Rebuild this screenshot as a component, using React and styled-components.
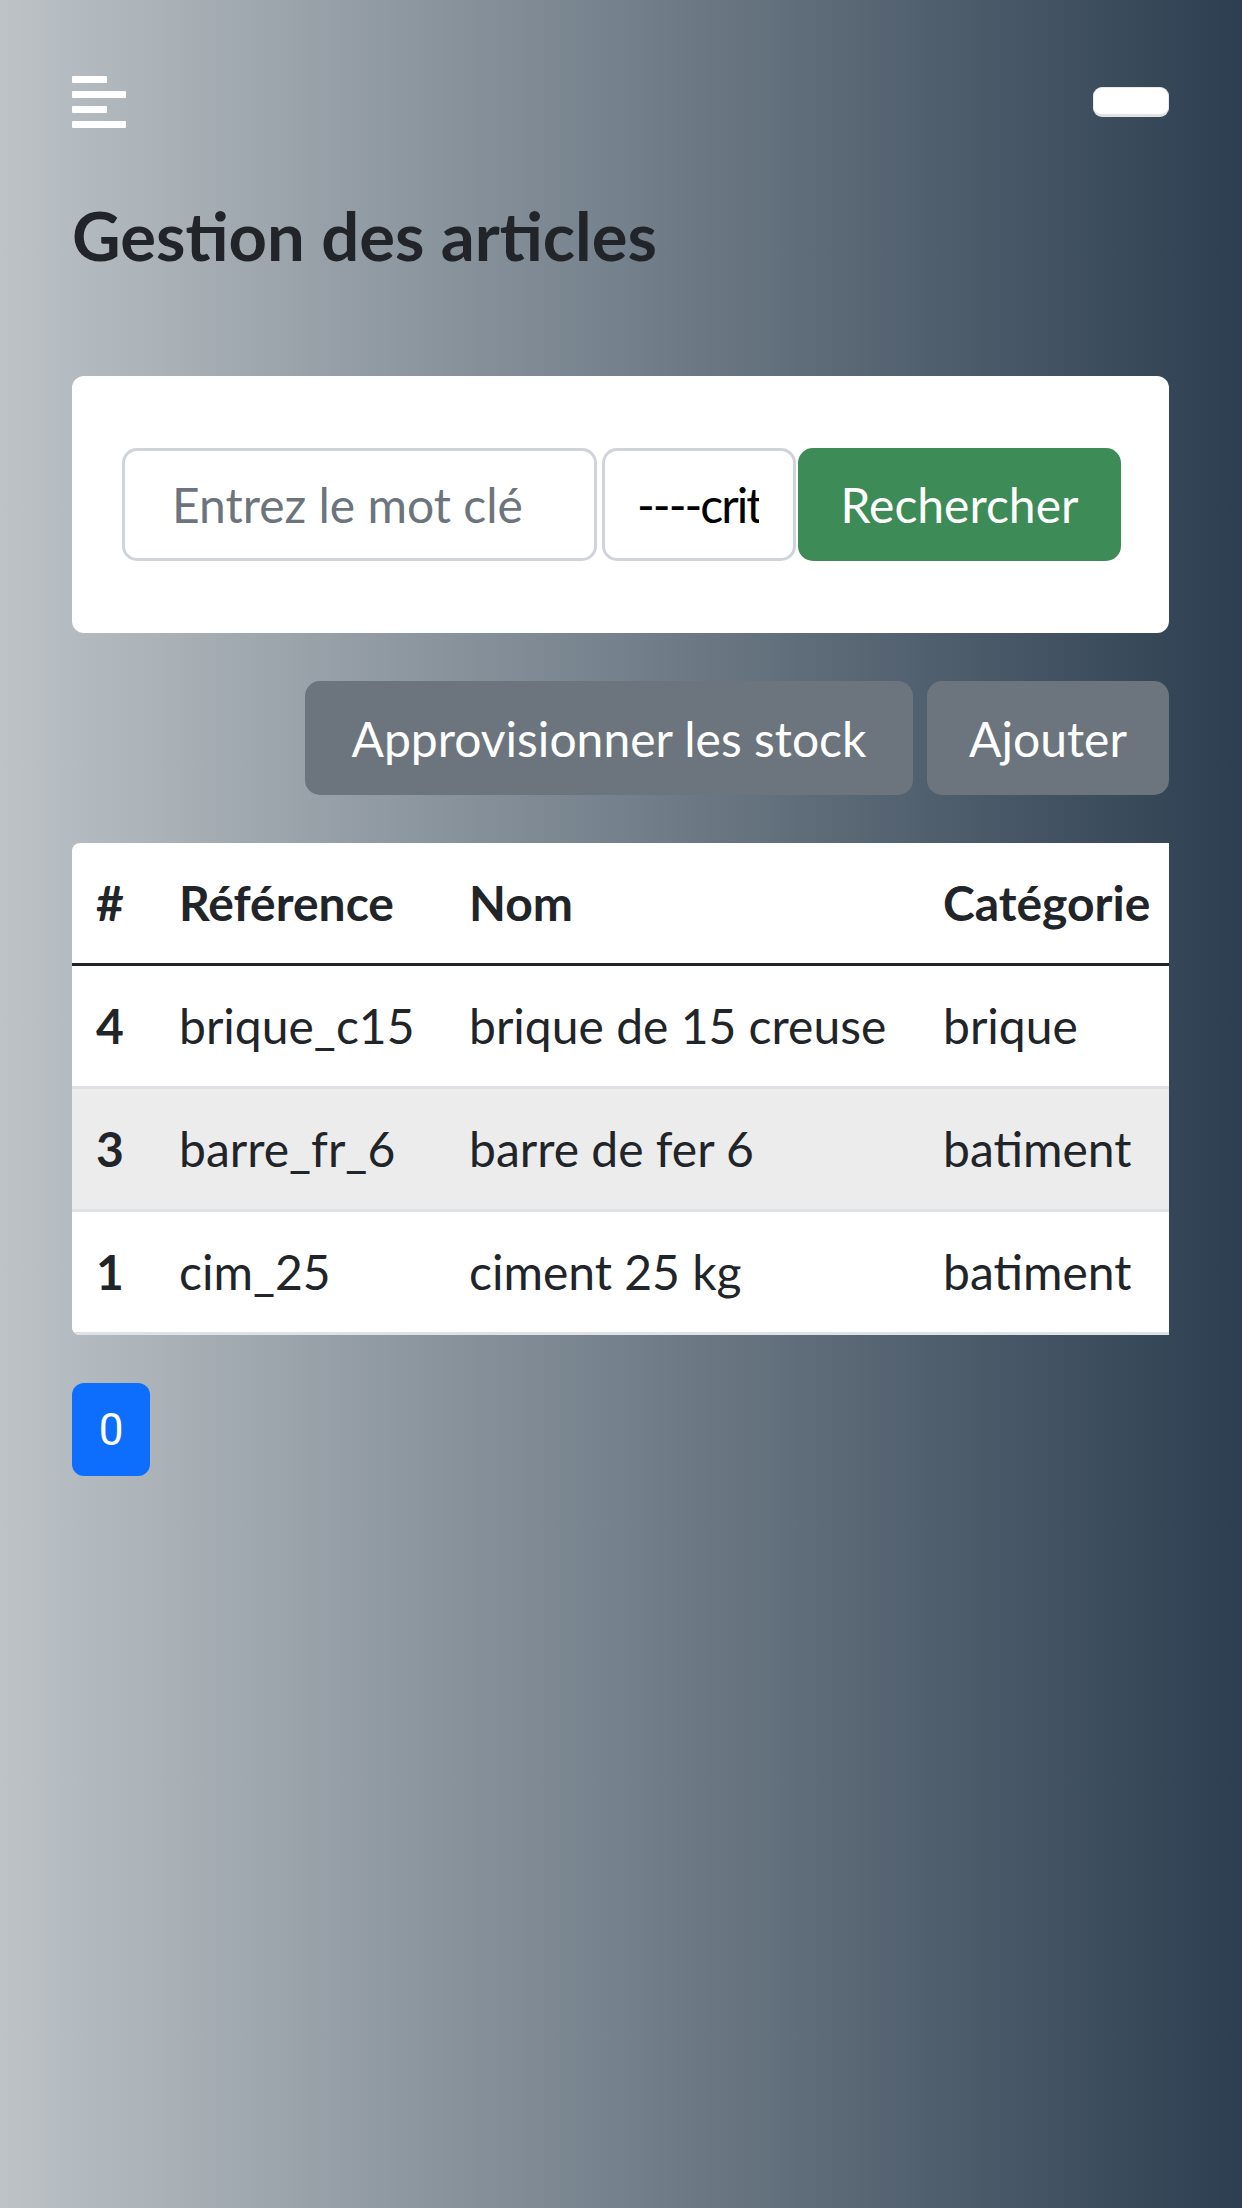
import React from 'react';
import styled, { createGlobalStyle } from 'styled-components';

const GlobalStyle = createGlobalStyle`
  html, body {
    margin: 0;
    padding: 0;
  }
  body {
    min-height: 2208px;
    background: linear-gradient(to right, #bdc3c7, #2c3e50);
    font-family: Lato, "Open Sans", sans-serif;
    color: #212529;
  }
  * {
    box-sizing: border-box;
  }
`;

const Page = styled.div`
  padding: 0 73px 0 72px;
`;

const Navbar = styled.nav`
  display: flex;
  justify-content: space-between;
  align-items: center;
  padding-top: 60px;
  height: 144px;
`;

const TogglePill = styled.div`
  width: 76px;
  height: 30px;
  background: #fff;
  border: 1px solid #e9e9e9;
  border-bottom: 3px solid #e2e2e2;
  border-radius: 9px;
`;

const Title = styled.h2`
  margin: 51px 0 0;
  font-size: 67px;
  font-weight: 700;
  line-height: 1.2;
  color: #212529;
`;

const SearchCard = styled.div`
  margin-top: 101px;
  background: #fff;
  border-radius: 12px;
  padding: 72px 48px 72px 50px;
  display: flex;
  align-items: center;
`;

const SearchInput = styled.input`
  flex: none;
  width: 475px;
  height: 113px;
  border: 3px solid #ced4da;
  border-radius: 15px;
  padding: 0 47px;
  font-family: inherit;
  font-size: 48px;
  color: #212529;
  outline: none;

  &::placeholder {
    color: #6c757d;
  }
`;

const CritSelect = styled.div`
  flex: none;
  width: 194px;
  height: 113px;
  margin-left: 5px;
  border: 3px solid #ced4da;
  border-radius: 15px;
  padding: 0 34px 0 32px;
  display: flex;
  align-items: center;
  font-size: 48px;
  color: #000;
  overflow: hidden;
`;

const CritText = styled.span`
  display: block;
  overflow: hidden;
  white-space: nowrap;
  letter-spacing: -2px;
`;

const SearchButton = styled.button`
  flex: none;
  width: 323px;
  height: 113px;
  margin-left: 2px;
  border: none;
  border-radius: 15px;
  background: #3d8b56;
  color: #fff;
  font-family: inherit;
  font-size: 48px;
`;

const Actions = styled.div`
  display: flex;
  justify-content: flex-end;
  gap: 14px;
  margin-top: 48px;
`;

const ActionButton = styled.button`
  width: ${(p) => p.w}px;
  height: 114px;
  border: none;
  border-radius: 15px;
  background: #6c757d;
  color: #fff;
  font-family: inherit;
  font-size: 48px;
  white-space: nowrap;
`;

const TableWrap = styled.div`
  margin-top: 48px;
  overflow: hidden;
  border-radius: 8px 0 0 8px;
`;

const Table = styled.table`
  table-layout: fixed;
  width: 1900px;
  border-collapse: collapse;
  background: #fff;
  font-size: 48px;
  line-height: 72px;
`;

const Th = styled.th`
  padding: 24px;
  text-align: left;
  font-weight: 700;
  white-space: nowrap;
  border-bottom: 3px solid #212529;
`;

const Row = styled.tr`
  background: ${(p) => (p.striped ? '#ececec' : '#fff')};
`;

const Td = styled.td`
  padding: 24px;
  white-space: nowrap;
  font-weight: ${(p) => (p.bold ? 700 : 400)};
  border-bottom: 3px solid #dee2e6;
`;

const Pagination = styled.div`
  display: flex;
  margin-top: 48px;
`;

const PageButton = styled.button`
  width: 78px;
  height: 93px;
  border: none;
  border-radius: 12px;
  background: #0d6efd;
  color: #fff;
  font-family: Roboto, sans-serif;
  font-size: 44px;
`;

const MenuIcon = () => (
  <svg width="54" height="52" viewBox="0 0 54 52">
    <rect x="0" y="0" width="35" height="7" rx="1" fill="#fff" />
    <rect x="0" y="15" width="54" height="7" rx="1" fill="#fff" />
    <rect x="0" y="30" width="35" height="7" rx="1" fill="#fff" />
    <rect x="0" y="45" width="54" height="7" rx="1" fill="#fff" />
  </svg>
);

const columns = [
  { label: '#', width: 83 },
  { label: 'Référence', width: 290 },
  { label: 'Nom', width: 474 },
  { label: 'Catégorie', width: 330 },
  { label: 'Prix', width: 220 },
  { label: 'Quantité', width: 260 },
  { label: 'Actions', width: 243 },
];

const articles = [
  { id: 4, ref: 'brique_c15', nom: 'brique de 15 creuse', cat: 'brique', prix: 350, qte: 120 },
  { id: 3, ref: 'barre_fr_6', nom: 'barre de fer 6', cat: 'batiment', prix: 2500, qte: 40 },
  { id: 1, ref: 'cim_25', nom: 'ciment 25 kg', cat: 'batiment', prix: 4500, qte: 75 },
];

const App = () => {
  return (
    <Page>
      <GlobalStyle />
      <Navbar>
        <MenuIcon />
        <TogglePill />
      </Navbar>

      <Title>Gestion des articles</Title>

      <SearchCard>
        <SearchInput type="text" placeholder="Entrez le mot clé" />
        <CritSelect>
          <CritText>----crit</CritText>
        </CritSelect>
        <SearchButton>Rechercher</SearchButton>
      </SearchCard>

      <Actions>
        <ActionButton w={608}>Approvisionner les stock</ActionButton>
        <ActionButton w={242}>Ajouter</ActionButton>
      </Actions>

      <TableWrap>
        <Table>
          <colgroup>
            {columns.map((c) => (
              <col key={c.label} style={{ width: c.width }} />
            ))}
          </colgroup>
          <thead>
            <tr>
              {columns.map((c) => (
                <Th key={c.label}>{c.label}</Th>
              ))}
            </tr>
          </thead>
          <tbody>
            {articles.map((a, i) => (
              <Row key={a.id} striped={i === 1}>
                <Td bold>{a.id}</Td>
                <Td>{a.ref}</Td>
                <Td>{a.nom}</Td>
                <Td>{a.cat}</Td>
                <Td>{a.prix}</Td>
                <Td>{a.qte}</Td>
                <Td>Modifier</Td>
              </Row>
            ))}
          </tbody>
        </Table>
      </TableWrap>

      <Pagination>
        <PageButton>0</PageButton>
      </Pagination>
    </Page>
  );
};

export default App;
